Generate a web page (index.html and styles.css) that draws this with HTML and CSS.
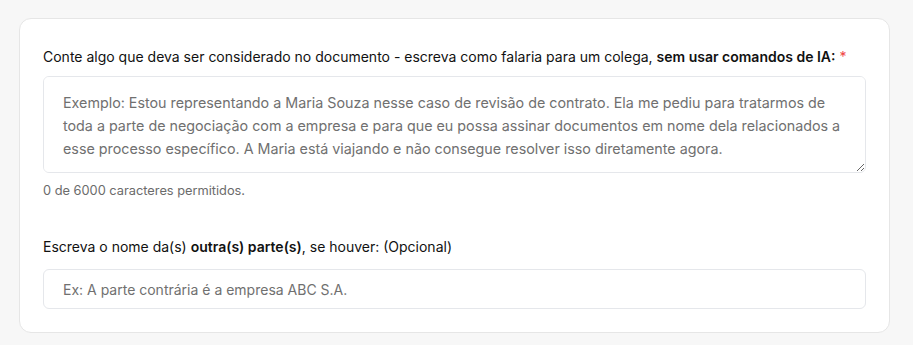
FILE: index.html
```html
<!DOCTYPE html>
<html lang="pt-BR">
<head>
<meta charset="utf-8">
<link rel="stylesheet" href="styles.css">
</head>
<body>
<div class="card">
  <div class="field">
    <label class="label">Conte algo que deva ser considerado no documento - escreva como falaria para um colega, <strong>sem usar comandos de IA:</strong> <span class="req">*</span></label>
    <textarea class="textarea" placeholder="Exemplo: Estou representando a Maria Souza nesse caso de revisão de contrato. Ela me pediu para tratarmos de toda a parte de negociação com a empresa e para que eu possa assinar documentos em nome dela relacionados a esse processo específico. A Maria está viajando e não consegue resolver isso diretamente agora."></textarea>
    <div class="hint">0 de 6000 caracteres permitidos.</div>
  </div>
  <div class="field field-2">
    <label class="label">Escreva o nome da(s) <strong>outra(s) parte(s)</strong>, se houver: (Opcional)</label>
    <input class="input" type="text" placeholder="Ex: A parte contrária é a empresa ABC S.A.">
  </div>
</div>
</body>
</html>
```

FILE: styles.css
```css
* { box-sizing: border-box; }
html, body { margin: 0; padding: 0; }
body {
  background: #f7f7f7;
  font-family: Inter, "Noto Sans", sans-serif;
  color: #111;
  padding: 18px 24px 13px 19px;
}
.card {
  width: 871px;
  background: #fff;
  border: 1px solid #e6e6e6;
  border-radius: 12px;
  padding: 28px 23px 23px 23px;
}
.field { display: flex; flex-direction: column; }
.label {
  font-size: 14px;
  line-height: 20px;
  color: #111;
}
.label strong { font-weight: 600; }
.req { color: #ef4444; }
.textarea {
  margin-top: 9px;
  height: 97px;
  width: 100%;
  border: 1px solid #e5e7eb;
  border-radius: 6px;
  padding: 14px 22px 14px 19px;
  font-family: Inter, "Noto Sans", sans-serif;
  font-size: 14.3px;
  line-height: 23px;
  resize: vertical;
  outline: none;
}
.textarea::placeholder, .input::placeholder { color: #707070; opacity: 1; }
.hint {
  margin-top: 8px;
  font-size: 12.8px;
  line-height: 20px;
  color: #6b6b6b;
}
.field-2 { margin-top: 36px; }
.input {
  margin-top: 12px;
  height: 40px;
  width: 100%;
  border: 1px solid #e5e7eb;
  border-radius: 6px;
  padding-top: 0;
  padding-bottom: 0;
  padding-left: 19px;
  padding-right: 19px;
  font-family: Inter, "Noto Sans", sans-serif;
  font-size: 14px;
  outline: none;
}
```
